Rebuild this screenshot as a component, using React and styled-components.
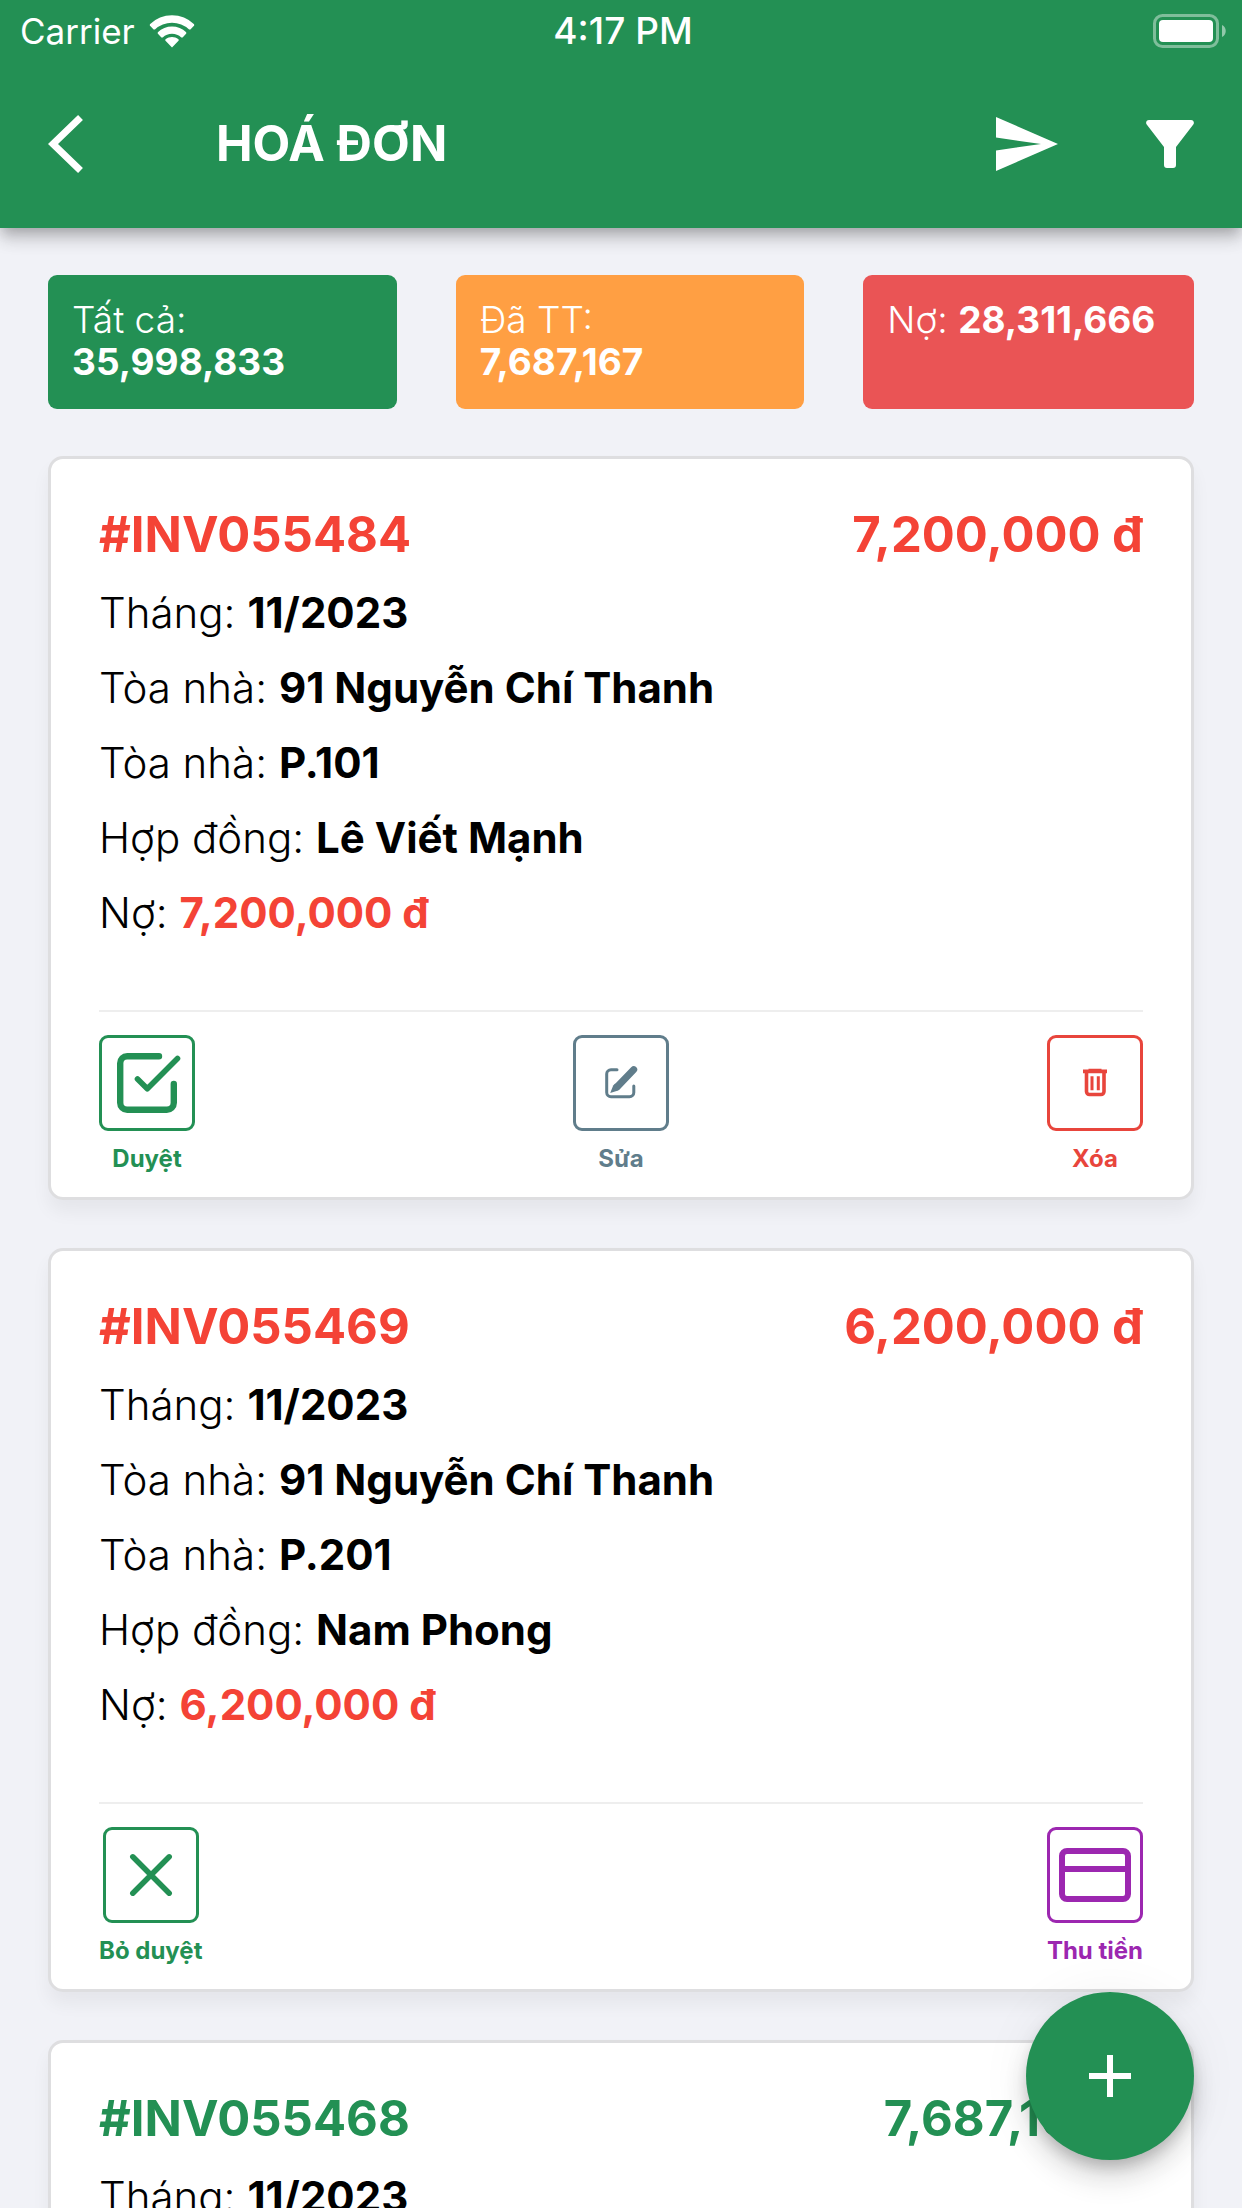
import React from "react";
import styled, { createGlobalStyle } from "styled-components";

const green = "#239054";
const red = "#f44336";

const GlobalStyle = createGlobalStyle`
  *, *::before, *::after { box-sizing: border-box; }
  body { margin: 0; background: #f1f2f7; font-family: Inter, "Liberation Sans", sans-serif; color: #000; }
  h1, h2, p, dl, dd { margin: 0; }
  button { font: inherit; color: inherit; background: none; border: 0; padding: 0; cursor: pointer; }
  svg { display: block; }
`;

const Screen = styled.div`
  height: 100vh;
  display: flex;
  flex-direction: column;
  overflow: hidden;
`;

const TopBar = styled.header`
  flex: none;
  position: relative;
  z-index: 1;
  background: ${green};
  color: #fff;
  box-shadow: 0 6px 12px -3px rgba(0, 0, 0, 0.2), 0 12px 15px rgba(0, 0, 0, 0.14), 0 3px 30px rgba(0, 0, 0, 0.06);
`;

const StatusBar = styled.div`
  height: 60px;
  padding: 2px 16px 0 20px;
  display: grid;
  grid-template-columns: 1fr auto 1fr;
  align-items: center;
  font-size: 35px;
  line-height: 58px;
`;

const Carrier = styled.div`
  display: flex;
  align-items: center;
  gap: 14px;
`;

const Clock = styled.time`
  font-size: 37px;
  font-weight: 500;
`;

const Battery = styled.svg`
  justify-self: end;
`;

const NavBar = styled.nav`
  height: 168px;
  padding: 0 48px;
  display: flex;
  align-items: center;
`;

const Title = styled.h1`
  flex: 1;
  padding-left: 132px;
  font-size: 49px;
  line-height: 60px;
  font-weight: 700;
`;

const NavActions = styled.div`
  display: flex;
  align-items: center;
  gap: 88px;
`;

const Content = styled.main`
  flex: 1;
  min-height: 0;
  overflow-y: auto;
  scrollbar-width: none;
  padding: 47px 48px;
`;

const Summary = styled.section`
  display: grid;
  grid-template-columns: 349fr 349fr 331fr;
  gap: 59px;
  margin-bottom: 47px;
`;

const SummaryBox = styled.p`
  min-height: 134px;
  padding: 24px;
  border-radius: 9px;
  background: ${(p) => p.$color};
  color: #fff;
  font-size: 37px;
  line-height: 42px;
  font-weight: 300;
  white-space: nowrap;

  strong {
    display: ${(p) => (p.$stacked ? "block" : "inline")};
    font-weight: 700;
  }
`;

const List = styled.section`
  display: flex;
  flex-direction: column;
  gap: 48px;
`;

const Card = styled.article`
  padding: 38px 48px 22px;
  border: 3px solid #dedee0;
  border-radius: 15px;
  background: #fff;
  box-shadow: 0 12px 18px rgba(0, 0, 0, 0.05);
`;

const CardHead = styled.div`
  display: flex;
  justify-content: space-between;
  margin-bottom: 3px;
  color: ${(p) => p.$color};
  font-size: 49px;
  line-height: 75px;
  font-weight: 700;
`;

const Code = styled.h2`
  font: inherit;
`;

const Details = styled.dl`
  font-size: 42px;
  line-height: 75px;
`;

const Detail = styled.div`
  display: flex;
  gap: 12px;

  dt { font-weight: 300; }
  dd { font-weight: 700; color: ${(p) => p.$color || "#000"}; }
`;

const Actions = styled.div`
  display: flex;
  justify-content: space-between;
  margin-top: 60px;
  padding-top: 23px;
  border-top: 2px solid #eee;
`;

const Action = styled.button`
  display: flex;
  flex-direction: column;
  align-items: center;
  gap: 12px;
  color: ${(p) => p.$color};
  font-size: 24px;
  line-height: 32px;
  font-weight: 700;
`;

const ActionIcon = styled.span`
  width: 96px;
  height: 96px;
  display: grid;
  place-items: center;
  border: 3px solid;
  border-radius: 9px;
`;

const AddButton = styled.button`
  position: fixed;
  right: 48px;
  bottom: 48px;
  z-index: 2;
  width: 168px;
  height: 168px;
  display: grid;
  place-items: center;
  border-radius: 50%;
  background: ${green};
  color: #fff;
  box-shadow: 0 9px 15px -3px rgba(0, 0, 0, 0.2), 0 18px 30px rgba(0, 0, 0, 0.14), 0 3px 54px rgba(0, 0, 0, 0.06);
`;

const icons = {
  check: (
    <g strokeLinecap="round" strokeLinejoin="round">
      <path strokeWidth="6.400" d="M60 21.200H28.200a7 7 0 0 0-7 7v39.600a7 7 0 0 0 7 7h39.600a7 7 0 0 0 7-7V49" />
      <path strokeWidth="5.600" d="M38.500 44l9.800 9.800L78.500 23.500" />
    </g>
  ),
  edit: (
    <g strokeLinecap="round">
      <path strokeWidth="3" d="M44 34.700h-6a4.300 4.300 0 0 0-4.300 4.300v18.500a4.300 4.300 0 0 0 4.300 4.300h18.500a4.300 4.300 0 0 0 4.300-4.300V51" />
      <path strokeWidth="7" d="M44.500 51.500L60.700 34.600" />
      <path stroke="none" fill="currentColor" d="M40.200 50.500l-3 7.500 8-2.400 2-2-5-5z" />
    </g>
  ),
  trash: (
    <g strokeWidth="3.600">
      <path d="M36 36.400h24M41.500 35.600h13M39.500 37v19.500a3 3 0 0 0 3 3h11.500a3 3 0 0 0 3-3V37" />
      <path strokeWidth="3" d="M45 41.300v14M51.300 41.300v14" />
    </g>
  ),
  cross: <path strokeWidth="5.500" strokeLinecap="round" d="M29.800 29.800l36.400 36.400M66.200 29.800L29.800 66.200" />,
  card: (
    <g strokeWidth="6">
      <rect x="15" y="24" width="66" height="48" rx="5" />
      <path d="M15 42h66" />
    </g>
  ),
};

function Icon({ name }) {
  return (
    <svg width="90" height="90" viewBox="3 3 90 90" fill="none" stroke="currentColor" aria-hidden="true">
      {icons[name]}
    </svg>
  );
}

const approve = { label: "Duyệt", icon: "check", color: green };
const edit = { label: "Sửa", icon: "edit", color: "#607d8b" };
const remove = { label: "Xóa", icon: "trash", color: "#e8453c" };
const unapprove = { label: "Bỏ duyệt", icon: "cross", color: green };
const collect = { label: "Thu tiền", icon: "card", color: "#9c27b0" };

const invoices = [
  {
    code: "#INV055484", total: "7,200,000 đ", color: red, month: "11/2023", building: "91 Nguyễn Chí Thanh",
    room: "P.101", contract: "Lê Viết Mạnh", debt: "7,200,000 đ", actions: [approve, edit, remove],
  },
  {
    code: "#INV055469", total: "6,200,000 đ", color: red, month: "11/2023", building: "91 Nguyễn Chí Thanh",
    room: "P.201", contract: "Nam Phong", debt: "6,200,000 đ", actions: [unapprove, collect],
  },
  {
    code: "#INV055468", total: "7,687,167 đ", color: green, month: "11/2023",
  },
];

function Row({ label, value, color }) {
  if (!value) return null;
  return (
    <Detail $color={color}>
      <dt>{label}:</dt>
      <dd>{value}</dd>
    </Detail>
  );
}

function Invoice({ invoice }) {
  return (
    <Card>
      <CardHead $color={invoice.color}>
        <Code>{invoice.code}</Code>
        <span>{invoice.total}</span>
      </CardHead>
      <Details>
        <Row label="Tháng" value={invoice.month} />
        <Row label="Tòa nhà" value={invoice.building} />
        <Row label="Tòa nhà" value={invoice.room} />
        <Row label="Hợp đồng" value={invoice.contract} />
        <Row label="Nợ" value={invoice.debt} color={red} />
      </Details>
      {invoice.actions && (
        <Actions>
          {invoice.actions.map((a) => (
            <Action key={a.label} type="button" $color={a.color}>
              <ActionIcon><Icon name={a.icon} /></ActionIcon>
              {a.label}
            </Action>
          ))}
        </Actions>
      )}
    </Card>
  );
}

export default function App() {
  return (
    <Screen>
      <GlobalStyle />
      <TopBar>
        <StatusBar>
          <Carrier>
            Carrier
            <svg width="46" height="34" viewBox="0 0 46 34" fill="#fff" aria-hidden="true">
              <path d="M23 33.500l-6.500-6.800a1 1 0 0 1 .1-1.500c3.700-3 9.100-3 12.800 0a1 1 0 0 1 .1 1.500z" />
              <path d="M8.800 18.300a20.500 20.500 0 0 1 28.400 0l.1 1.300-3.700 3.800-1.300 0a14 14 0 0 0-18.600 0l-1.300 0-3.700-3.800z" />
              <path d="M.9 10.200a31.500 31.500 0 0 1 44.200 0l.1 1.300-3.800 3.900-1.300 0a25.200 25.200 0 0 0-34.200 0l-1.300 0L.8 11.500z" />
            </svg>
          </Carrier>
          <Clock>4:17 PM</Clock>
          <Battery width="73" height="34" viewBox="0 0 73 34" aria-hidden="true">
            <rect x="1.500" y="1.500" width="63" height="31" rx="8" fill="none" stroke="#fff" strokeOpacity=".42" strokeWidth="3" />
            <rect x="6" y="6" width="54" height="22" rx="4" fill="#fff" />
            <path d="M69 11c5 2 5 10 0 12z" fill="#fff" fillOpacity=".5" />
          </Battery>
        </StatusBar>
        <NavBar>
          <button type="button" aria-label="Quay lại">
            <svg width="36" height="60" viewBox="0 0 36 60" fill="none" stroke="#fff" strokeWidth="7">
              <path d="M32.500 3.500L5 30l27.500 26.500" />
            </svg>
          </button>
          <Title>HOÁ ĐƠN</Title>
          <NavActions>
            <button type="button" aria-label="Gửi">
              <svg width="62" height="54" viewBox="0 0 62 54" fill="#fff">
                <path d="M0 0l62 27L0 54V33.500L45 27 0 20.500z" />
              </svg>
            </button>
            <button type="button" aria-label="Lọc">
              <svg width="48" height="48" viewBox="0 0 48 48" fill="#fff">
                <path d="M3 0h42c2.500 0 3.700 2.500 2.300 4.500L30 27v18a3 3 0 0 1-3 3h-6a3 3 0 0 1-3-3V27L.7 4.500C-.7 2.500.5 0 3 0z" />
              </svg>
            </button>
          </NavActions>
        </NavBar>
      </TopBar>
      <Content>
        <Summary>
          <SummaryBox $color={green} $stacked>Tất cả: <strong>35,998,833</strong></SummaryBox>
          <SummaryBox $color="#ff9f43" $stacked>Đã TT: <strong>7,687,167</strong></SummaryBox>
          <SummaryBox $color="#ea5455">Nợ: <strong>28,311,666</strong></SummaryBox>
        </Summary>
        <List>
          {invoices.map((invoice) => <Invoice key={invoice.code} invoice={invoice} />)}
        </List>
      </Content>
      <AddButton type="button" aria-label="Thêm hoá đơn">
        <svg width="42" height="42" viewBox="0 0 42 42" fill="none" stroke="#fff" strokeWidth="6">
          <path d="M21 0v42M0 21h42" />
        </svg>
      </AddButton>
    </Screen>
  );
}
